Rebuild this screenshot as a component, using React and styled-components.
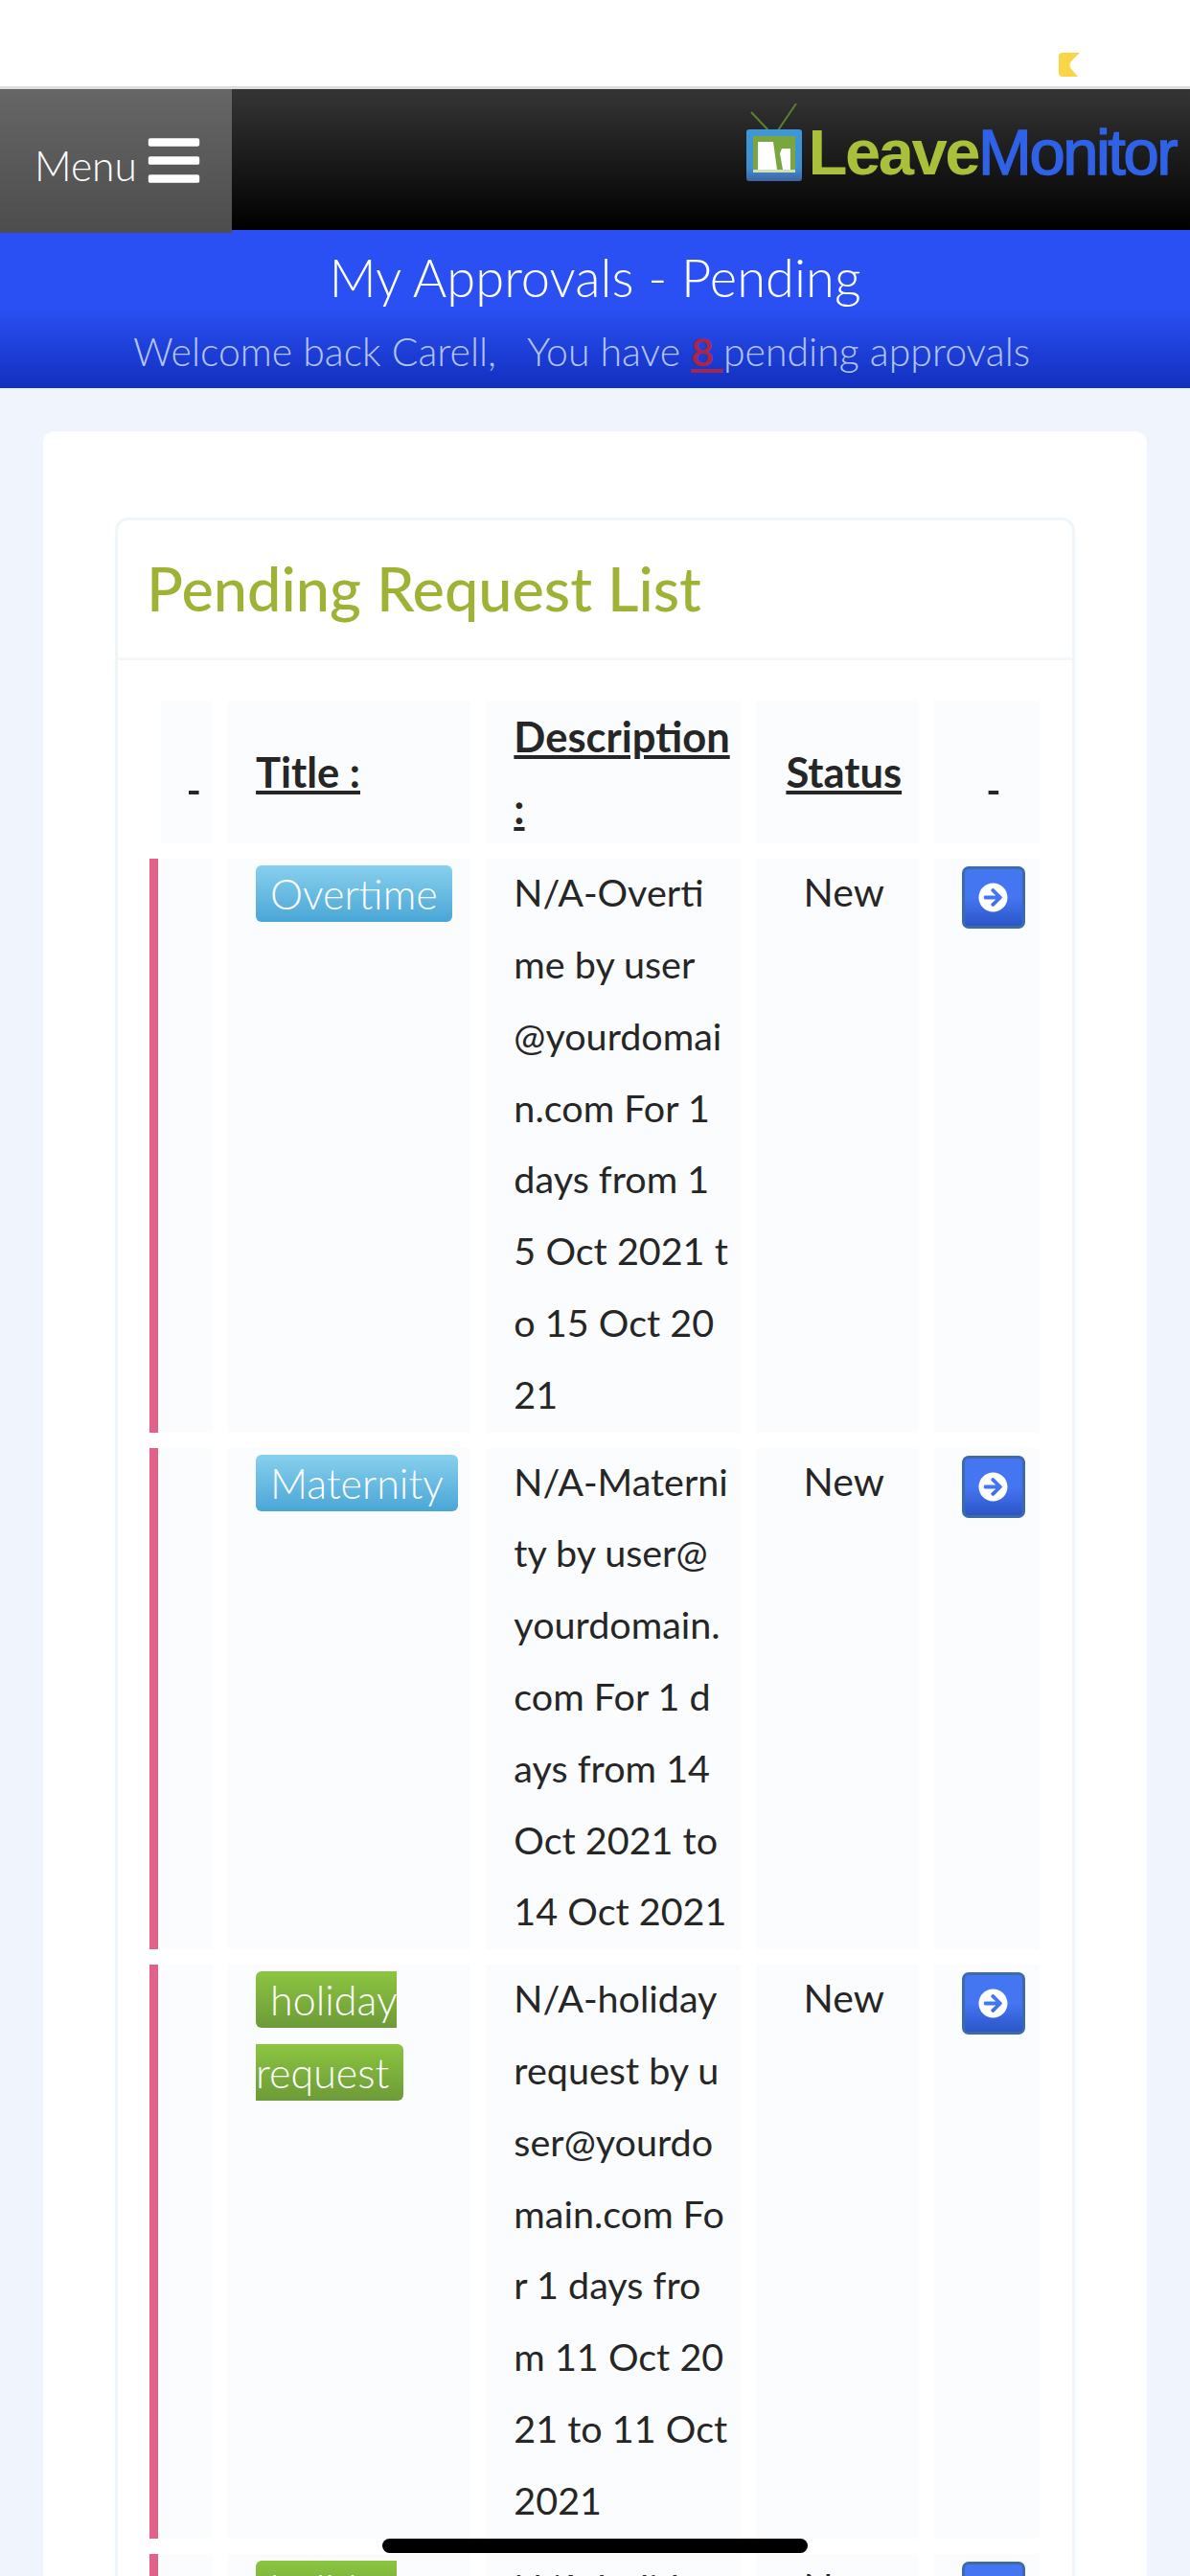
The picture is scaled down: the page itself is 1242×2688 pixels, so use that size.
import React from "react";
import styled, { createGlobalStyle } from "styled-components";
import { FaArrowCircleRight, FaBars } from "react-icons/fa";

const Global = createGlobalStyle`
  html, body { margin: 0; padding: 0; background: #f0f4fd; }
  body { font-family: "Lato", "Noto Sans", sans-serif; color: #262626; }
  #root { width: 1242px; height: 2688px; overflow: hidden; position: relative; }
`;

const StatusBar = styled.div`
  height: 93px;
  background: #fff;
  border-bottom: 3px solid #ddd;
  display: flex;
  justify-content: flex-end;
  align-items: flex-start;
  padding: 55px 115px 0 0;
  box-sizing: border-box;
`;
const Header = styled.header`
  height: 147px;
  background: linear-gradient(#353535, #000);
  display: flex;
  justify-content: space-between;
  align-items: flex-start;
`;
const MenuButton = styled.div`
  width: 242px;
  height: 150px;
  background: linear-gradient(#666, #4d4d4d);
  color: #fff;
  display: flex;
  align-items: flex-start;
  gap: 8px;
  padding: 51px 0 0 36px;
  box-sizing: border-box;
  font-size: 42.5px;
  font-weight: 300;
  position: relative;
  z-index: 1;
`;
const MenuLabel = styled.span`
  line-height: 48px;
  margin-top: 5px;
`;
const BarsIcon = styled(FaBars)`
  margin-top: -7px;
  flex: none;
`;
const Logo = styled.div`
  display: flex;
  align-items: flex-start;
  padding: 15px 15px 0 0;
  filter: blur(0.7px);
`;
const LogoWord = styled.span`
  font-family: "Liberation Sans", sans-serif;
  font-weight: 700;
  font-size: 67px;
  line-height: 80px;
  letter-spacing: -2.5px;
  margin: 11px 0 0 7px;
  color: #a9c13a;
`;
const LogoBlue = styled.span`
  color: #2f62e6;
  font-weight: 400;
  -webkit-text-stroke: 1.5px #2f62e6;
`;
const Banner = styled.section`
  height: 165px;
  background: linear-gradient(#2a4ff2 0%, #2a4ff2 50%, #1230bf 100%);
  text-align: center;
  padding-top: 20px;
  box-sizing: border-box;
`;
const BannerTitle = styled.h1`
  margin: 0;
  font-size: 54.3px;
  font-weight: 300;
  line-height: 58px;
  color: #fff;
`;
const BannerSub = styled.p`
  margin: 26px 28px 0 0;
  font-size: 41px;
  font-weight: 300;
  line-height: 46px;
  color: #b4c4f4;
  white-space: pre;
`;
const Count = styled.span`
  color: #a6264f;
  font-weight: 700;
  text-decoration: underline;
`;
const Page = styled.main`
  padding: 45px 45px 0;
`;
const Card = styled.div`
  background: #fff;
  border-radius: 12px;
  padding: 90px 75px 0 75px;
`;
const Panel = styled.div`
  border: 3px solid #eef6fb;
  border-radius: 14px;
`;
const PanelHead = styled.div`
  height: 141px;
  border-bottom: 3px solid #f2f7fb;
  padding: 0 0 2px 30px;
  box-sizing: content-box;
  display: flex;
  align-items: center;
  margin-bottom: -2px;
`;
const PanelTitle = styled.h2`
  margin: 0;
  font-size: 63px;
  font-weight: 500;
  color: #a0b236;
`;
const Table = styled.table`
  table-layout: fixed;
  width: 949px;
  margin: 28px 0 0 29px;
  border-collapse: separate;
  border-spacing: 16.5px;
`;
const Th = styled.th`
  height: 148px;
  padding: 0 15px 0 29px;
  background: #fbfcfe;
  font-size: 43.5px;
  font-weight: 700;
  line-height: 74.6px;
  text-align: ${(p) => p.$align || "left"};
  text-decoration: underline;
  vertical-align: middle;
  white-space: pre;
`;
const WrapTh = styled(Th)`
  white-space: normal;
`;
const Td = styled.td`
  padding: 0 15px 0 29px;
  background: #fbfcfe;
  font-size: 41px;
  font-weight: 400;
  line-height: 74.8px;
  text-align: ${(p) => p.$align || "left"};
  vertical-align: top;
`;
const MarkCell = styled(Td)`
  box-shadow: -3px 0 0 #fff, -12px 0 0 #e36089;
`;
const Line = styled.div`
  white-space: nowrap;
  font-size: 39.5px;
  &:first-child { margin-top: -2px; }
  &:last-child { margin-bottom: 2px; }
`;
const StatusText = styled(Line)`
  font-size: 41px;
`;
const Badge = styled.span`
  color: #fff;
  font-size: 43px;
  font-weight: 300;
  padding: 4px 15px;
  border-radius: 6px;
  background: ${(p) =>
    p.$tone === "green"
      ? "linear-gradient(#8bc540, #6d9a38)"
      : "linear-gradient(#88d0ee, #4aa6d6)"};
`;
const GoButton = styled.button`
  width: 66px;
  height: 65px;
  margin-top: 8px;
  padding: 0;
  border: 3px solid #3d6aa8;
  border-radius: 7px;
  background: linear-gradient(#4476f2 50%, #2c55c7);
  color: #fff;
  display: flex;
  align-items: center;
  justify-content: center;
`;
const Indicator = styled.div`
  position: absolute;
  left: 399px;
  top: 2649px;
  width: 444px;
  height: 15px;
  border-radius: 8px;
  background: #000;
`;

const rows = [
  { tone: "blue", badge: "Overtime", lines: ["N/A-Overti", "me by user", "@yourdomai", "n.com For 1", "days from 1", "5 Oct 2021 t", "o 15 Oct 20", "21"] },
  { tone: "blue", badge: "Maternity", lines: ["N/A-Materni", "ty by user@", "yourdomain.", "com For 1 d", "ays from 14", "Oct 2021 to", "14 Oct 2021"] },
  { tone: "green", badge: "holiday request", lines: ["N/A-holiday", "request by u", "ser@yourdo", "main.com Fo", "r 1 days fro", "m 11 Oct 20", "21 to 11 Oct", "2021"] },
  { tone: "green", badge: "holiday request", lines: ["N/A-holiday", "request by u", "ser@yourdo", "main.com Fo"] },
];

const widths = [54, 253, 265, 170, 110];

export default function App() {
  return (
    <>
      <Global />
      <StatusBar>
        <svg width="22" height="25" viewBox="0 0 22 25">
          <path d="M4 0H22L14 8Q9 13 14 18L20 25H4Q0 25 0 21V4Q0 0 4 0Z" fill="#f9d548" />
        </svg>
      </StatusBar>
      <Header>
        <MenuButton>
          <MenuLabel>Menu</MenuLabel>
          <BarsIcon size={61} />
        </MenuButton>
        <Logo>
          <svg width="58" height="82" viewBox="0 0 58 82">
            <defs>
              <linearGradient id="tvFrame" x1="0" y1="0" x2="0" y2="1">
                <stop offset="0" stopColor="#3f97d8" />
                <stop offset="0.75" stopColor="#3f8fd0" />
                <stop offset="1" stopColor="#3f62a2" />
              </linearGradient>
            </defs>
            <path d="M5 9L23 28M52 0L33 28" stroke="#5d7f34" strokeWidth="2" fill="none" />
            <rect x="0" y="27" width="58" height="54" rx="3" fill="url(#tvFrame)" />
            <rect x="7" y="34" width="44" height="38" fill="#7aa640" />
            <rect x="12" y="40" width="34" height="29" fill="#fff" />
            <path d="M28 40H46V47L37 47L35 52L38 69H32Z" fill="#7aa640" />
            <rect x="7" y="69" width="44" height="3" fill="#cfe0b8" />
          </svg>
          <LogoWord>Leave<LogoBlue>Monitor</LogoBlue></LogoWord>
        </Logo>
      </Header>
      <Banner>
        <BannerTitle>My Approvals - Pending</BannerTitle>
        <BannerSub>Welcome back Carell,   You have <Count>8 </Count>pending approvals</BannerSub>
      </Banner>
      <Page>
        <Card>
          <Panel>
            <PanelHead>
              <PanelTitle>Pending Request List</PanelTitle>
            </PanelHead>
            <Table>
              <colgroup>
                {widths.map((w, i) => (
                  <col key={i} width={w} />
                ))}
              </colgroup>
              <thead>
                <tr>
                  <Th $align="center"> </Th>
                  <Th>Title :</Th>
                  <WrapTh>Description :</WrapTh>
                  <Th $align="center">Status</Th>
                  <Th $align="center"> </Th>
                </tr>
              </thead>
              <tbody>
                {rows.map((r, i) => (
                  <tr key={i}>
                    <MarkCell />
                    <Td>
                      <Badge $tone={r.tone}>{r.badge}</Badge>
                    </Td>
                    <Td>
                      {r.lines.map((l) => (
                        <Line key={l}>{l}</Line>
                      ))}
                    </Td>
                    <Td $align="center">
                      <StatusText>New</StatusText>
                    </Td>
                    <Td>
                      <GoButton aria-label="Open">
                        <FaArrowCircleRight size={31} />
                      </GoButton>
                    </Td>
                  </tr>
                ))}
              </tbody>
            </Table>
          </Panel>
        </Card>
      </Page>
      <Indicator />
    </>
  );
}
